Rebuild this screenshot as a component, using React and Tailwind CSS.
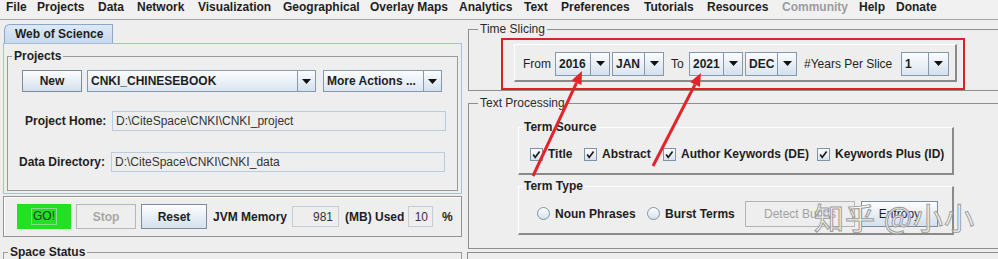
import React from "react";

const menus = [
  ["File", "w-[31px]"],
  ["Projects", "w-[61px]"],
  ["Data", "w-[39px]"],
  ["Network", "w-[61px]"],
  ["Visualization", "w-[85px]"],
  ["Geographical", "w-[87px]"],
  ["Overlay Maps", "w-[89px]"],
  ["Analytics", "w-[65px]"],
  ["Text", "w-[37px]"],
  ["Preferences", "w-[83px]"],
  ["Tutorials", "w-[63px]"],
  ["Resources", "w-[75px]"],
  ["Community", "w-[77px] text-[#9c9c9c]"],
  ["Help", "w-[37px]"],
  ["Donate", "w-[60px]"],
];

const Arrow = () => (
  <svg width="9" height="5" viewBox="0 0 9 5">
    <path d="M0 0h9L4.5 5z" fill="#111" />
  </svg>
);

// combo box: text part + arrow button
function Combo({ text, textCls, arrowCls = "w-[19px]", h = "h-[24px]" }) {
  return (
    <div className={"flex shrink-0 " + h}>
      <div className={"flex items-center border border-[#8598ad] bg-linear-to-b from-[#fbfcfe] to-[#dbe6f2] pl-[3px] font-bold " + textCls}>
        {text}
      </div>
      <div className={"flex items-center justify-center border-y border-r border-[#8598ad] bg-linear-to-b from-[#fbfcfe] to-[#d3e0ee] " + arrowCls}>
        <Arrow />
      </div>
    </div>
  );
}

const Check = () => (
  <svg width="13" height="13" viewBox="0 0 13 13" className="shrink-0">
    <defs>
      <linearGradient id="cbg" x1="0" y1="0" x2="0" y2="1">
        <stop offset="0" stopColor="#ffffff" />
        <stop offset="1" stopColor="#d5e0ec" />
      </linearGradient>
    </defs>
    <rect x="0.5" y="0.5" width="12" height="12" fill="url(#cbg)" stroke="#7f93aa" />
    <path d="M3.2 6.6 L5.2 9.4 L9.6 3.4" fill="none" stroke="#1a1a1a" strokeWidth="1.7" />
  </svg>
);

const Radio = () => (
  <svg width="13" height="13" viewBox="0 0 13 13" className="shrink-0">
    <defs>
      <linearGradient id="rbg" x1="0" y1="0" x2="0" y2="1">
        <stop offset="0" stopColor="#ffffff" />
        <stop offset="1" stopColor="#d3dee9" />
      </linearGradient>
    </defs>
    <circle cx="6.5" cy="6.5" r="6" fill="url(#rbg)" stroke="#8193a8" />
  </svg>
);

function LeftPane() {
  return (
    <div className="w-[463px] shrink-0">
      <div className="h-[23px] pl-[4px] pt-[4px]">
        <div className="flex h-[19px] w-[109px] items-center rounded-tl-[6px] border border-b-0 border-[#8ca7c6] bg-linear-to-b from-[#dde9f6] to-[#c5d9ee] pl-[10px] font-bold">
          Web of Science
        </div>
      </div>
      <div className="ml-[3px] h-[151px] w-[459px] border border-[#a6bfdb] pl-[3px] pt-[4px]">
        <div className="w-[451px]">
          <div className="flex h-[16px]">
            <div className="mt-[8px] w-[5px] border-l border-t border-[#9a9a9a]" />
            <span className="px-[2px] font-bold">Projects</span>
            <div className="mt-[8px] flex-1 border-r border-t border-[#9a9a9a]" />
          </div>
          <div className="h-[127px] border-x border-b border-[#9a9a9a] pt-[6px]">
            <div className="flex h-[22px] pl-[14px]">
              <div className="flex h-[22px] w-[60px] items-center justify-center border border-[#7b8c9e] bg-linear-to-b from-[#fdfdfe] to-[#d4e0ed] font-bold">
                New
              </div>
              <div className="ml-[5px]">
                <Combo text="CNKI_CHINESEBOOK" textCls="w-[211px]" arrowCls="w-[18px]" h="h-[22px]" />
              </div>
              <div className="ml-[7px]">
                <Combo text="More Actions ..." textCls="w-[101px]" arrowCls="w-[18px]" h="h-[22px]" />
              </div>
            </div>
            <div className="mt-[19px] flex h-[20px] items-center pl-[17px]">
              <div className="w-[87px] font-bold">Project Home:</div>
              <div className="flex h-[20px] w-[334px] items-center border border-[#b9cde2] pl-[3px] text-[#333]">
                D:\CiteSpace\CNKI\CNKI_project
              </div>
            </div>
            <div className="mt-[21px] flex h-[20px] items-center pl-[11px]">
              <div className="w-[92px] font-bold">Data Directory:</div>
              <div className="flex h-[20px] w-[334px] items-center border border-[#b9cde2] pl-[3px] text-[#333]">
                D:\CiteSpace\CNKI\CNKI_data
              </div>
            </div>
          </div>
        </div>
      </div>

      <div className="ml-[3px] mt-[2px] flex h-[41px] w-[459px] items-center border border-[#949494] pl-[13px] shadow-[inset_1px_1px_0_#ffffff]">
        <div className="flex h-[25px] w-[54px] items-center justify-center bg-[#22e022]">
          <span className="border border-[#8ad88a] px-[1px] leading-[15px] text-[#1b3a1b]">GO!</span>
        </div>
        <div className="ml-[5px] flex h-[25px] w-[60px] items-center justify-center border border-[#b6b6b6] font-bold text-[#a6a6a6]">
          Stop
        </div>
        <div className="ml-[5px] flex h-[25px] w-[66px] items-center justify-center border border-[#7b8c9e] bg-linear-to-b from-[#fdfdfe] to-[#d4e0ed] font-bold">
          Reset
        </div>
        <div className="ml-[6px] w-[79px] font-bold">JVM Memory</div>
        <div className="flex h-[21px] w-[47px] items-center justify-end border border-[#c6cdd5] pr-[5px] text-[#333]">981</div>
        <div className="ml-[6px] w-[63px] font-bold">(MB) Used</div>
        <div className="flex h-[21px] w-[25px] items-center justify-end border border-[#c6cdd5] pr-[4px] text-[#333]">10</div>
        <div className="ml-[9px] font-bold">%</div>
      </div>

      <div className="ml-[3px] mt-[7px] w-[459px]">
        <div className="flex h-[16px]">
          <div className="mt-[8px] w-[5px] border-l border-t border-[#9a9a9a]" />
          <span className="px-[2px] font-bold">Space Status</span>
          <div className="mt-[8px] flex-1 border-r border-t border-[#9a9a9a]" />
        </div>
        <div className="h-[20px] border-x border-[#9a9a9a]" />
      </div>
    </div>
  );
}

function RightPane() {
  return (
    <div className="w-[535px] shrink-0">
      {/* Time Slicing */}
      <div className="ml-[2px] mt-[1px]">
        <div className="flex h-[16px]">
          <div className="mt-[8px] w-[10px] border-l border-t border-[#8e8e8e]" />
          <span className="px-[2px] text-[#2a2a2a]">Time Slicing</span>
          <div className="mt-[8px] flex-1 border-t border-[#8e8e8e]" />
        </div>
        <div className="border-b border-l border-[#8e8e8e] pb-[8px] pl-[45px] pt-[7px]">
          <div className="flex h-[38px] w-[443px] items-center border-b-2 border-l border-r-2 border-t border-b-[#8a8a8a] border-l-white border-r-[#8a8a8a] border-t-white pl-[8px] pt-[2px]">
            <div className="w-[32px] shrink-0">From</div>
            <Combo text="2016" textCls="w-[36px]" />
            <div className="ml-[2px]">
              <Combo text="JAN" textCls="w-[33px]" />
            </div>
            <div className="ml-[7px] w-[18px] shrink-0">To</div>
            <Combo text="2021" textCls="w-[35px]" />
            <div className="ml-[2px]">
              <Combo text="DEC" textCls="w-[33px]" />
            </div>
            <div className="ml-[7px] w-[97px] shrink-0">#Years Per Slice</div>
            <Combo text="1" textCls="w-[28px]" arrowCls="w-[20px]" />
          </div>
        </div>
      </div>

      {/* Text Processing */}
      <div className="ml-[2px] mt-[4px]">
        <div className="flex h-[16px]">
          <div className="mt-[8px] w-[10px] border-l border-t border-[#8e8e8e]" />
          <span className="px-[2px] text-[#2a2a2a]">Text Processing</span>
          <div className="mt-[8px] flex-1 border-t border-[#8e8e8e]" />
        </div>
        <div className="h-[138px] border-b border-l border-[#8e8e8e] pl-[49px] pt-[8px]">
          <div className="w-[436px]">
            <div className="flex h-[16px]">
              <div className="mt-[8px] w-[5px] border-l border-t border-white" />
              <span className="px-[1px] font-bold">Term Source</span>
              <div className="mt-[8px] flex-1 border-r-2 border-t border-r-[#8a8a8a] border-t-white" />
            </div>
            <div className="flex h-[40px] items-center border-b-2 border-l border-r-2 border-b-[#8a8a8a] border-l-white border-r-[#8a8a8a] pl-[11px]">
              <div className="flex w-[54px] items-center">
                <Check />
                <span className="ml-[5px] font-bold">Title</span>
              </div>
              <div className="flex w-[79px] items-center">
                <Check />
                <span className="ml-[5px] font-bold">Abstract</span>
              </div>
              <div className="flex w-[154px] items-center">
                <Check />
                <span className="ml-[5px] font-bold">Author Keywords (DE)</span>
              </div>
              <div className="flex items-center">
                <Check />
                <span className="ml-[5px] font-bold">Keywords Plus (ID)</span>
              </div>
            </div>

            <div className="mt-[3px] flex h-[16px]">
              <div className="mt-[8px] w-[5px] border-l border-t border-white" />
              <span className="px-[1px] font-bold">Term Type</span>
              <div className="mt-[8px] flex-1 border-r-2 border-t border-r-[#8a8a8a] border-t-white" />
            </div>
            <div className="flex h-[41px] items-center border-b-2 border-l border-r-2 border-b-[#8a8a8a] border-l-white border-r-[#8a8a8a] pl-[18px]">
              <div className="flex w-[110px] items-center">
                <Radio />
                <span className="ml-[5px] font-bold">Noun Phrases</span>
              </div>
              <div className="flex w-[98px] items-center">
                <Radio />
                <span className="ml-[5px] font-bold">Burst Terms</span>
              </div>
              <div className="flex h-[26px] w-[110px] items-center justify-center border border-[#b4b4b4] text-[#a2a2a2]">
                Detect Bursts
              </div>
              <div className="ml-[6px] flex h-[26px] w-[77px] items-center justify-center border border-[#7b8c9e] bg-linear-to-b from-[#fdfdfe] to-[#d4e0ed]">
                Entropy
              </div>
            </div>
          </div>
        </div>
      </div>

      <div className="ml-[1px] mt-[3px] h-[20px] border-l border-t border-[#8e8e8e]" />
    </div>
  );
}

export default function App() {
  return (
    <div className="relative h-[259px] w-[998px] overflow-hidden bg-[#eeeeee] font-['Liberation_Sans','Noto_Sans_CJK_SC',sans-serif] text-[12px] leading-[16px] text-[#1e1e1e]">
      <div className="flex h-[20px] border-b border-[#a8a8a8] bg-[#f1f1f1] pl-[6px] font-bold">
        {menus.map(([m, c]) => (
          <div key={m} className={"shrink-0 leading-[15px] " + c}>
            {m}
          </div>
        ))}
      </div>
      <div className="flex">
        <LeftPane />
        <div className="w-[3px] shrink-0" />
        <RightPane />
      </div>

      {/* annotations drawn over the screenshot */}
      <div className="pointer-events-none absolute left-[501px] top-[38px] h-[52px] w-[464px] border-2 border-[#d8232a]" />
      <svg className="pointer-events-none absolute left-0 top-0" width="998" height="259">
        <line x1="533" y1="176" x2="576.5" y2="82.8" stroke="#e3242b" strokeWidth="3" />
        <path d="M582 71 L581.5 85.1 L571.5 80.5 Z" fill="#e3242b" />
        <line x1="653" y1="166" x2="695" y2="84.5" stroke="#e3242b" strokeWidth="3" />
        <path d="M701 73 L699.9 87 L690.1 82 Z" fill="#e3242b" />
      </svg>
      <div className="pointer-events-none absolute left-[814px] top-[196px] whitespace-nowrap font-['Noto_Sans_CJK_SC',sans-serif] text-[30px] leading-[40px] tracking-[1px] text-white/80 [-webkit-text-stroke:1px_#9a9a9a]">
        知乎 @小小
      </div>
    </div>
  );
}
